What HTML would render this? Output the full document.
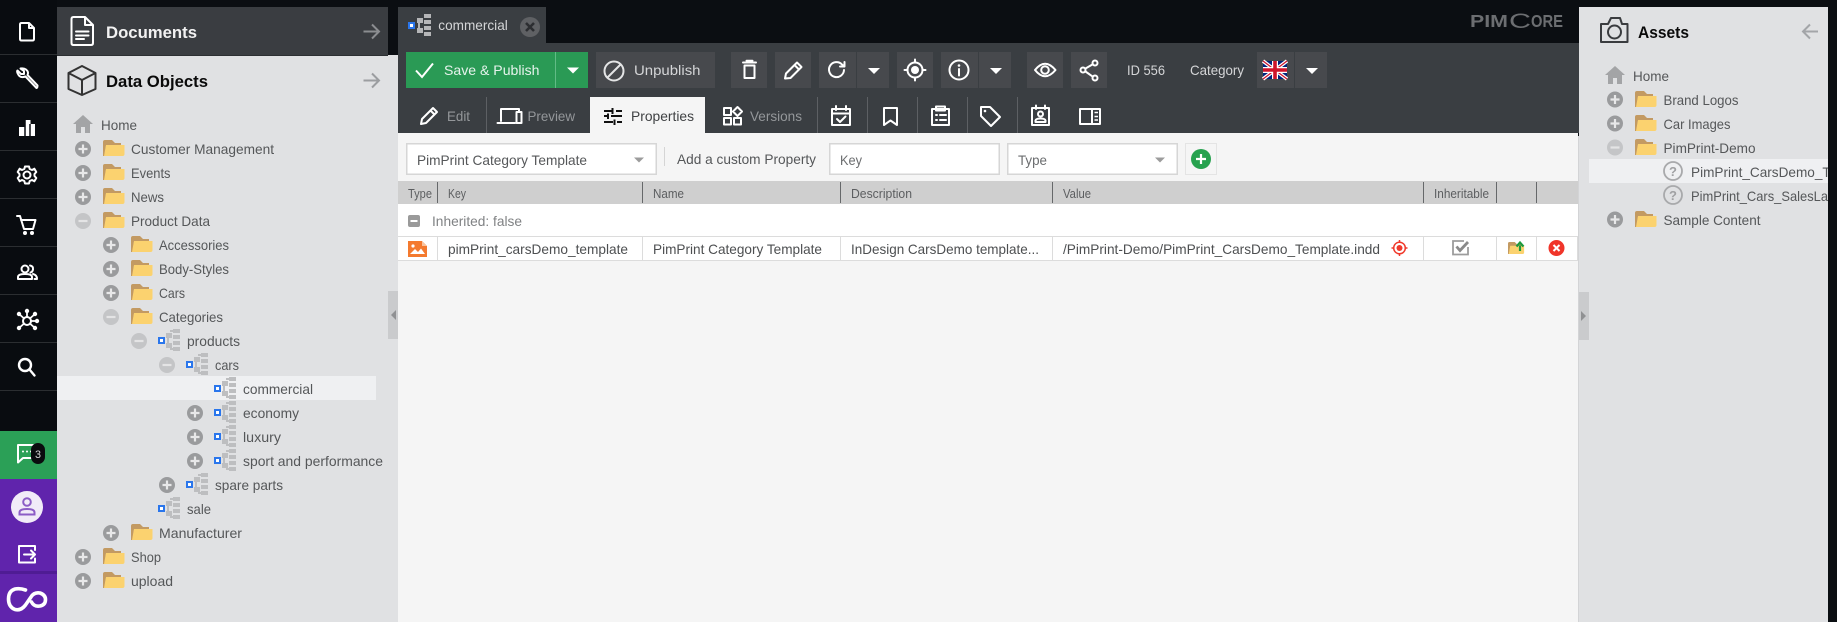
<!DOCTYPE html>
<html><head><meta charset="utf-8"><title>Pimcore</title>
<style>
html,body{margin:0;padding:0;width:1837px;height:622px;overflow:hidden;background:#0b0e12}
svg{display:block}
text{font-family:"Liberation Sans",sans-serif;font-size:14px;fill:#555759}
.b{font-weight:bold;font-size:17px;fill:#0a0a0a}
.l{fill:#d4d5d7}
.m{fill:#94979a}
.h{font-size:12.5px;fill:#5c5e60}
.r{fill:#4d4f51}
.w{fill:none;stroke:#fff;stroke-width:2;stroke-linecap:round;stroke-linejoin:round}
.w3{fill:none;stroke:#e4e5e6;stroke-width:2;stroke-linecap:round;stroke-linejoin:round}
.dk{fill:none;stroke:#333;stroke-width:2;stroke-linecap:round;stroke-linejoin:round}
.g{fill:#47494d}
</style></head>
<body>
<svg width="1837" height="622" viewBox="0 0 1837 622" xmlns="http://www.w3.org/2000/svg">
<defs>
<g id="plus"><circle r="8" fill="#9a9b9d"/><path d="M-4.500 0H4.500M0-4.500V4.500" stroke="#e8e8e9" stroke-width="2.200"/></g>
<g id="minus"><circle r="8" fill="#c4c5c7"/><path d="M-4.500 0H4.500" stroke="#e4e4e5" stroke-width="2.200"/></g>
<g id="folder"><path d="M0 16V2Q0 0 2 0H9L12 3H18V6H3L1.500 16Z" fill="#c39a62"/><path d="M1 16L3 5H21.500V14Q21.500 16 19.500 16Z" fill="#fbd26f"/></g>
<g id="obj"><rect x="1" y="9" width="5" height="5" fill="#fff" stroke="#2a76ec" stroke-width="2"/>
<g fill="#bdbec0"><rect x="15" y="0" width="7" height="4"/><rect x="8" y="4" width="6" height="5"/><rect x="15" y="6" width="7" height="4"/><rect x="15" y="12" width="7" height="4"/><rect x="8" y="14" width="6" height="5"/><rect x="15" y="18" width="7" height="4"/><rect x="9" y="9" width="2" height="5"/><rect x="12" y="1" width="3" height="2"/><rect x="12" y="19" width="3" height="2"/></g></g>
<g id="home"><path d="M10 0L20 9H17V18H12V12H8V18H3V9H0Z" fill="#a3a4a6"/></g>
<path id="tri" d="M-6-3H6L0 3Z" fill="#fff"/>
<path id="tri2" d="M-5-2.500H5L0 2.500Z" fill="#9c9c9c"/>
</defs>

<rect width="1837" height="622" fill="#0b0e12"/>

<!-- sidebar -->
<rect x="0" y="0" width="57" height="431" fill="#090c10"/>
<g stroke="#2b2e31" stroke-width="1"><path d="M0 54.500H57M0 102.500H57M0 150.500H57M0 198.500H57M0 246.500H57M0 294.500H57M0 342.500H57M0 390.500H57"/></g>
<path class="w" d="M20 24.500Q20 23 21.500 23H29L34 28V39Q34 40.500 32.500 40.500H21.500Q20 40.500 20 39ZM29 23V28H34" stroke-width="2.200"/>
<path class="w" d="M36.500 88L25.500 76.500Q20 78.500 18 74Q16.500 71.500 17.500 70.500L21 74H24V71L20.500 68.500Q24 68 26 69.500Q29 72 27.500 75L37.500 85.500Q37.500 88 36.500 88Z"/>
<path d="M19 127h6v9h-6zM24.500 120h6v16h-6zM30 124h5v12h-5z" fill="#fff"/><path d="M25 120v16M30 124v12" stroke="#090c10" stroke-width="1.500"/>
<g class="w"><circle cx="27" cy="175" r="3.500"/><path d="M25 166.500H29L29.700 169L32 170L34.300 168.700L36.300 172L34.500 174L34.500 176L36.300 178L34.300 181.300L32 180L29.700 181L29 183.500H25L24.300 181L22 180L19.700 181.300L17.700 178L19.500 176L19.500 174L17.700 172L19.700 168.700L22 170L24.300 169Z"/></g>
<path class="w" d="M17 216H20L24 229H33L35.500 220H21"/><circle cx="25" cy="233" r="2" fill="#fff"/><circle cx="32" cy="233" r="2" fill="#fff"/>
<g class="w"><circle cx="25" cy="269" r="3.500"/><path d="M18 279V277Q18 274 25 274Q32 274 32 277V279ZM30 265.500Q33.500 266 33 269.500Q32.500 272 30.500 272.500M33 274Q37 275 37 279H34.500"/></g>
<g><path stroke="#fff" stroke-width="1.800" d="M27 321L19 314M27 321L35 314M27 321L19 328M27 321L35 328M27 321L27 312M27 321L37 321"/><circle cx="27" cy="321" r="4" fill="#090c10" stroke="#fff" stroke-width="2"/><circle cx="19" cy="314" r="2.200" fill="#fff"/><circle cx="35" cy="314" r="2.200" fill="#fff"/><circle cx="19" cy="328" r="2.200" fill="#fff"/><circle cx="35" cy="328" r="2.200" fill="#fff"/><circle cx="27" cy="311" r="2.200" fill="#fff"/><circle cx="37" cy="321" r="2.200" fill="#fff"/></g>
<g class="w" style="stroke-width:2.400"><circle cx="25" cy="365" r="6"/><path d="M29.500 369.500L34.500 375.500"/></g>

<rect x="0" y="431" width="57" height="48" fill="#2ba057"/>
<path class="w" d="M18 445H34V458H23L18 462.500Z"/><circle cx="23" cy="451.500" r="1" fill="#fff"/><circle cx="27" cy="451.500" r="1" fill="#fff"/><circle cx="31" cy="451.500" r="1" fill="#fff"/>
<rect x="31" y="443" width="14" height="21" rx="7" fill="#0a0c0e"/>
<text x="35" y="458" style="font-size:11px;fill:#d8d8d8" textLength="6" lengthAdjust="spacingAndGlyphs">3</text>
<rect x="0" y="479" width="57" height="143" fill="#6024ac"/>
<circle cx="27" cy="507" r="16" fill="#f1ebf8"/>
<g fill="none" stroke="#8c5cc6" stroke-width="2"><circle cx="27" cy="502" r="3.800"/><path d="M19.500 514.500V512.500Q19.500 509 27 509Q34.500 509 34.500 512.500V514.500Z"/></g>
<path class="w" d="M35 550V546H19V562.500H35V558.500M24 554.500H35M31 550.500L35 554.500L31 558.500"/>
<rect x="0" y="571" width="57" height="3" fill="#4f1c94"/>
<path d="M25.500 590Q20 588 15 589Q8.500 591 8.500 599Q8.500 607 15 609.500Q21 611 25.500 605L31 597Q34 592 40 593Q45.500 595 45.500 599.500Q45.500 605 40 606Q34 607 31.500 602" fill="none" stroke="#fff" stroke-width="3.600" stroke-linecap="round"/>

<!-- left panel -->
<rect x="57" y="7" width="331" height="615" fill="#e0e1e3"/>
<rect x="57" y="7" width="331" height="48" fill="#3a3d41"/>
<path d="M57 55.500H388" stroke="#2c2f32"/>
<path class="w" d="M71.500 19Q71.500 17 73.500 17H85L93 25V43Q93 45 91 45H73.500Q71.500 45 71.500 43ZM85 17V25H93M76 31.500H88.500M76 35.500H88.500M76 39H84" stroke-width="1.800"/>
<text class="b" x="106" y="38" style="fill:#f2f2f2" textLength="91" lengthAdjust="spacingAndGlyphs">Documents</text>
<path d="M363.500 31.500H378.500M372 24.500L379 31.500L372 38.500" fill="none" stroke="#8b8d90" stroke-width="2"/>
<g class="dk"><path d="M82 66L95.500 73V89L82 95L68.500 89V73ZM68.500 73L82 80L95.500 73M82 80V95"/></g>
<text class="b" x="106" y="87" textLength="102" lengthAdjust="spacingAndGlyphs">Data Objects</text>
<path d="M363.500 80.500H378.500M372 73.500L379 80.500L372 87.500" fill="none" stroke="#9b9da0" stroke-width="2"/>

<use href="#home" x="73" y="115"/>
<text x="101" y="130" textLength="36" lengthAdjust="spacingAndGlyphs">Home</text>

<use href="#plus" x="83" y="149"/><use href="#folder" x="103" y="140"/><text x="131" y="154" textLength="143" lengthAdjust="spacingAndGlyphs">Customer Management</text>
<use href="#plus" x="83" y="173"/><use href="#folder" x="103" y="164"/><text x="131" y="178" textLength="39.500" lengthAdjust="spacingAndGlyphs">Events</text>
<use href="#plus" x="83" y="197"/><use href="#folder" x="103" y="188"/><text x="131" y="202" textLength="33" lengthAdjust="spacingAndGlyphs">News</text>
<use href="#minus" x="83" y="221"/><use href="#folder" x="103" y="212"/><text x="131" y="226" textLength="79" lengthAdjust="spacingAndGlyphs">Product Data</text>
<use href="#plus" x="111" y="245"/><use href="#folder" x="131" y="236"/><text x="159" y="250" textLength="70" lengthAdjust="spacingAndGlyphs">Accessories</text>
<use href="#plus" x="111" y="269"/><use href="#folder" x="131" y="260"/><text x="159" y="274" textLength="70" lengthAdjust="spacingAndGlyphs">Body-Styles</text>
<use href="#plus" x="111" y="293"/><use href="#folder" x="131" y="284"/><text x="159" y="298" textLength="26" lengthAdjust="spacingAndGlyphs">Cars</text>
<use href="#minus" x="111" y="317"/><use href="#folder" x="131" y="308"/><text x="159" y="322" textLength="64" lengthAdjust="spacingAndGlyphs">Categories</text>
<use href="#minus" x="139" y="341"/><use href="#obj" x="158" y="329"/><text x="187" y="346" textLength="53" lengthAdjust="spacingAndGlyphs">products</text>
<use href="#minus" x="167" y="365"/><use href="#obj" x="186" y="353"/><text x="215" y="370" textLength="24" lengthAdjust="spacingAndGlyphs">cars</text>
<rect x="57" y="376" width="319" height="24" fill="#eff0f2"/>
<use href="#obj" x="214" y="377"/><text x="243" y="394" textLength="70" lengthAdjust="spacingAndGlyphs">commercial</text>
<use href="#plus" x="195" y="413"/><use href="#obj" x="214" y="401"/><text x="243" y="418" textLength="56" lengthAdjust="spacingAndGlyphs">economy</text>
<use href="#plus" x="195" y="437"/><use href="#obj" x="214" y="425"/><text x="243" y="442" textLength="38" lengthAdjust="spacingAndGlyphs">luxury</text>
<use href="#plus" x="195" y="461"/><use href="#obj" x="214" y="449"/><text x="243" y="466" textLength="140" lengthAdjust="spacingAndGlyphs">sport and performance</text>
<use href="#plus" x="167" y="485"/><use href="#obj" x="186" y="473"/><text x="215" y="490" textLength="68" lengthAdjust="spacingAndGlyphs">spare parts</text>
<use href="#obj" x="158" y="497"/><text x="187" y="514" textLength="24" lengthAdjust="spacingAndGlyphs">sale</text>
<use href="#plus" x="111" y="533"/><use href="#folder" x="131" y="524"/><text x="159" y="538" textLength="83" lengthAdjust="spacingAndGlyphs">Manufacturer</text>
<use href="#plus" x="83" y="557"/><use href="#folder" x="103" y="548"/><text x="131" y="562" textLength="30" lengthAdjust="spacingAndGlyphs">Shop</text>
<use href="#plus" x="83" y="581"/><use href="#folder" x="103" y="572"/><text x="131" y="586" textLength="42" lengthAdjust="spacingAndGlyphs">upload</text>

<rect x="388" y="55" width="10" height="567" fill="#e0e1e3"/>
<rect x="388" y="291" width="10" height="48" fill="#cacbcd"/>
<path d="M391 315L396 310V320Z" fill="#909193"/>

<!-- main -->
<rect x="398" y="43" width="1181" height="90" fill="#3a3e42"/>
<rect x="398" y="133" width="1180" height="489" fill="#f5f5f5"/>
<rect x="398" y="7" width="148" height="36" fill="#3a3e42"/>
<rect x="409" y="23" width="5" height="5" fill="#fff" stroke="#2a76ec" stroke-width="2"/>
<g fill="#b5b6b8"><rect x="424" y="14" width="7" height="4"/><rect x="417" y="18" width="6" height="5"/><rect x="424" y="20" width="7" height="4"/><rect x="424" y="26" width="7" height="4"/><rect x="417" y="28" width="6" height="5"/><rect x="424" y="32" width="7" height="4"/><rect x="418" y="23" width="2" height="5"/></g>
<text class="l" x="438.300" y="30" textLength="69.500" lengthAdjust="spacingAndGlyphs">commercial</text>
<circle cx="530" cy="27" r="10" fill="#5f6164"/><path d="M526 23L534 31M534 23L526 31" stroke="#2c2e31" stroke-width="2.600"/>

<!-- logo -->
<text x="1470" y="27" textLength="38" lengthAdjust="spacingAndGlyphs" style="font-size:17.500px;font-weight:bold;fill:#6c6e71">PIM</text>
<text x="1509" y="28" textLength="22" lengthAdjust="spacingAndGlyphs" style="font-size:21px;fill:#6c6e71">C</text>
<text x="1531" y="27" textLength="32" lengthAdjust="spacingAndGlyphs" style="font-size:17.500px;font-weight:bold;fill:#6c6e71">ORE</text>

<!-- toolbar -->
<rect x="406" y="52" width="182" height="36" fill="#2a9a55"/>
<rect x="555" y="52" width="1" height="36" fill="#62bb86"/>
<path d="M416 70.500L422 77L433 63.500" fill="none" stroke="#fff" stroke-width="2"/>
<text x="444" y="75" style="fill:#e6f3ec" textLength="95.500" lengthAdjust="spacingAndGlyphs">Save &amp; Publish</text>
<use href="#tri" x="573" y="70.500"/>
<rect class="g" x="596" y="52" width="119" height="36"/>
<circle class="w3" cx="614" cy="71" r="9.500"/><path class="w3" d="M607.500 77.500L620.500 64.500"/>
<text class="l" x="634" y="75" textLength="66.500" lengthAdjust="spacingAndGlyphs">Unpublish</text>
<rect class="g" x="731" y="52" width="36" height="36"/>
<path class="w" d="M743 62.500H756M746.500 60.800H752.500M744.500 65.500H754.500V78H744.500Z"/>
<rect class="g" x="775" y="52" width="36" height="36"/>
<path class="w" d="M785 78.500L786 73.500L797 62.500L801.500 67L790.500 78ZM794.500 65L799 69.500"/>
<rect class="g" x="819" y="52" width="37" height="36"/>
<path class="w" d="M844 70A7.500 7.500 0 1 1 842 64.500L844.500 66.500M844.500 62V66.500H840"/>
<rect class="g" x="857" y="52" width="32" height="36"/><use href="#tri" x="874" y="71"/>
<rect class="g" x="897" y="52" width="36" height="36"/>
<circle class="w" cx="915" cy="70" r="7.500"/><circle cx="915" cy="70" r="4" fill="#fff"/><path class="w" d="M915 59.500V62.500M915 77.500V80.500M904.500 70H907.500M922.500 70H925.500"/>
<rect class="g" x="941" y="52" width="37" height="36"/>
<circle class="w" cx="959" cy="70" r="9.500"/><path class="w" d="M959 69V75.500"/><circle cx="959" cy="65.500" r="1.300" fill="#fff"/>
<rect class="g" x="979" y="52" width="32" height="36"/><use href="#tri" x="996" y="71"/>
<rect class="g" x="1027" y="52" width="36" height="36"/>
<path class="w" d="M1035 70Q1045 57.500 1055.500 70Q1045 82.500 1035 70Z"/><circle class="w" cx="1045" cy="70" r="3.800"/>
<rect class="g" x="1071" y="52" width="36" height="36"/>
<g class="w"><circle cx="1095" cy="63" r="2.500"/><circle cx="1095" cy="78" r="2.500"/><circle cx="1083" cy="70" r="2.500"/><path d="M1085.500 68.500L1092.800 64.300M1085.500 71.500L1092.800 76.700"/></g>
<text class="l" x="1127" y="75" textLength="38" lengthAdjust="spacingAndGlyphs">ID 556</text>
<text class="l" x="1190" y="75" textLength="54" lengthAdjust="spacingAndGlyphs">Category</text>
<rect class="g" x="1257" y="52" width="37" height="36"/>
<g><rect x="1263" y="61" width="24" height="18" fill="#00247d"/><path d="M1263 61L1287 79M1287 61L1263 79" stroke="#fff" stroke-width="3.600"/><path d="M1263 61L1287 79M1287 61L1263 79" stroke="#cf142b" stroke-width="1.200"/><path d="M1275 61V79M1263 70H1287" stroke="#fff" stroke-width="6"/><path d="M1275 61V79M1263 70H1287" stroke="#cf142b" stroke-width="3.600"/></g>
<rect class="g" x="1295" y="52" width="32" height="36"/><use href="#tri" x="1312" y="71"/>

<!-- tabs -->
<g stroke="#5d6064"><path d="M486.500 97V133M817.500 97V133M867.500 97V133M917.500 97V133M967.500 97V133M1017.500 97V133"/></g>
<rect x="590" y="97" width="115" height="36" fill="#f5f5f5"/>
<path class="w" d="M421 124L422 119L433 108L437 112L426 123ZM430.500 110.500L434.500 114.500"/>
<text class="m" x="447" y="121" textLength="23" lengthAdjust="spacingAndGlyphs">Edit</text>
<path class="w" d="M501 121V109H519V112M497.500 123H515M516.500 112H521.500V123H516.500Z"/>
<text class="m" x="527.500" y="121" textLength="47.500" lengthAdjust="spacingAndGlyphs">Preview</text>
<path d="M604 111H612M616 111H622M604 116H607M611 116H622M604 122H613M617 122H622M612.500 108V114M608 113.500V119M614.500 119.500V125" fill="none" stroke="#111" stroke-width="2"/>
<text x="631" y="121" style="fill:#3f4143" textLength="63" lengthAdjust="spacingAndGlyphs">Properties</text>
<path class="w" d="M724 108H731V115H724ZM724 118H731V124.500H724ZM734 118H741V124.500H734ZM737.500 107L742 111.500L737.500 116L733 111.500Z"/>
<text class="m" x="750" y="121" textLength="52" lengthAdjust="spacingAndGlyphs">Versions</text>
<path class="w" d="M832 109H850V125H832ZM832 113.500H850M836 106V110M846 106V110M837 119L840 122L845.500 116.500"/>
<path class="w" d="M884 108H897V125L890.500 120.500L884 125Z"/>
<path class="w" d="M932 109H949V125H932ZM936 106.500H945V110.500H936ZM936 115H937M940 115H946M936 120H937M940 120H946"/>
<path class="w" d="M981 107H990L1000 117L991 126L981 116Z"/><circle cx="985" cy="111" r="1.300" fill="#fff"/>
<path class="w" d="M1032 108H1049V125H1032ZM1036 105.500V109M1045 105.500V109"/><circle class="w" cx="1040.500" cy="114" r="2.500"/><path class="w" d="M1035.500 122V120.500Q1036 118.500 1040.500 118.500Q1045 118.500 1045.500 120.500V122Z"/>
<path class="w" d="M1080 109H1100V124H1080ZM1092 109V124"/><path d="M1094.500 112.500H1098M1094.500 116.500H1098M1094.500 120H1098" stroke="#fff" stroke-width="1.400"/>

<!-- form -->
<rect x="406.750" y="143.750" width="249.500" height="30.500" fill="#fff" stroke="#d6d6d6" stroke-width="1.500"/>
<text x="417" y="165" textLength="170" lengthAdjust="spacingAndGlyphs">PimPrint Category Template</text>
<use href="#tri2" x="639" y="160"/>
<path d="M664.500 147V166" stroke="#d5d5d5"/>
<text x="677" y="164" textLength="139" lengthAdjust="spacingAndGlyphs">Add a custom Property</text>
<rect x="829.750" y="143.750" width="169.500" height="30.500" fill="#fff" stroke="#d6d6d6" stroke-width="1.500"/>
<text x="840" y="165" style="fill:#6b6d6f" textLength="22" lengthAdjust="spacingAndGlyphs">Key</text>
<rect x="1007.750" y="143.750" width="169.500" height="30.500" fill="#fff" stroke="#d6d6d6" stroke-width="1.500"/>
<text x="1018" y="165" style="fill:#6b6d6f" textLength="29" lengthAdjust="spacingAndGlyphs">Type</text>
<use href="#tri2" x="1160" y="160"/>
<rect x="1185.500" y="143.500" width="31" height="31" fill="#f5f5f5" stroke="#e4e4e4"/>
<circle cx="1201" cy="159" r="10" fill="#27a24f"/><path d="M1196 159H1206M1201 154V164" stroke="#fff" stroke-width="2.200"/>

<!-- grid -->
<rect x="398" y="181" width="1180" height="23" fill="#cfcfcf"/>
<g stroke="#66686a" fill="none"><path d="M437.500 182V203M642.500 182V203M840.500 182V203M1052.500 182V203M1423.500 182V203M1496.500 182V203M1536.500 182V203"/></g>
<text class="h" x="408" y="198" textLength="24" lengthAdjust="spacingAndGlyphs">Type</text>
<text class="h" x="448" y="198" textLength="18" lengthAdjust="spacingAndGlyphs">Key</text>
<text class="h" x="653" y="198" textLength="31" lengthAdjust="spacingAndGlyphs">Name</text>
<text class="h" x="851" y="198" textLength="61" lengthAdjust="spacingAndGlyphs">Description</text>
<text class="h" x="1063" y="198" textLength="28" lengthAdjust="spacingAndGlyphs">Value</text>
<text class="h" x="1434" y="198" textLength="55" lengthAdjust="spacingAndGlyphs">Inheritable</text>
<rect x="398" y="204" width="1180" height="32" fill="#fff"/>
<rect x="408" y="215" width="12" height="12" rx="2" fill="#9a9a9a"/><path d="M410.500 221H417.500" stroke="#fff" stroke-width="2"/>
<text x="432" y="226" style="fill:#808284" textLength="90" lengthAdjust="spacingAndGlyphs">Inherited: false</text>
<rect x="398" y="236" width="1180" height="25" fill="#fff"/>
<g stroke="#dcdcdc" fill="none"><path d="M398 236.500H1577.500V260.500H398M437.500 236V261M642.500 236V261M840.500 236V261M1052.500 236V261M1423.500 236V261M1496.500 236V261M1536.500 236V261"/></g>
<path d="M408 241H422L427 246V257H408Z" fill="#f47a2f"/><path d="M422 241V246H427Z" fill="#f9c49f"/>
<circle cx="413" cy="246" r="1.600" fill="#fff"/><path d="M410 254L415 249L418 252L421 248.500L425 254Z" fill="#fff"/>
<text class="r" x="448" y="254" textLength="180" lengthAdjust="spacingAndGlyphs">pimPrint_carsDemo_template</text>
<text class="r" x="653" y="254" textLength="169" lengthAdjust="spacingAndGlyphs">PimPrint Category Template</text>
<text class="r" x="851" y="254" textLength="188" lengthAdjust="spacingAndGlyphs">InDesign CarsDemo template...</text>
<text class="r" x="1063" y="254" textLength="317" lengthAdjust="spacingAndGlyphs">/PimPrint-Demo/PimPrint_CarsDemo_Template.indd</text>
<circle cx="1399.500" cy="248" r="5.800" fill="none" stroke="#f0392b" stroke-width="1.500"/><circle cx="1399.500" cy="248" r="3" fill="#f0392b"/><path d="M1399.500 240V243M1399.500 253V256M1391.500 248H1394.500M1404.500 248H1407.500" stroke="#f0392b" stroke-width="1.500"/>
<path d="M1468 247V254.500H1453V241H1464" fill="none" stroke="#9c9c9c" stroke-width="1.800"/><path d="M1456.500 246.500L1460 250.500L1468 242" fill="none" stroke="#8a8a8a" stroke-width="2.800"/>
<use href="#folder" transform="translate(1508 242) scale(.75)"/>
<path d="M1520 251V245.500M1516.500 246.500L1520 242.500L1523.500 246.500" fill="none" stroke="#1c9a3c" stroke-width="2.200"/>
<circle cx="1556.500" cy="248" r="8" fill="#f0352a"/><path d="M1553.500 245L1559.500 251M1559.500 245L1553.500 251" stroke="#fff" stroke-width="2"/>

<path d="M1578.500 136V622" stroke="#d3d4d6"/>

<!-- right panel -->
<rect x="1579" y="7" width="249" height="615" fill="#e0e1e3"/>
<rect x="1579" y="292" width="10" height="48" fill="#cacbcd"/>
<path d="M1586 316L1581 311V321Z" fill="#909193"/>
<path class="dk" d="M1601 24H1608L1611 18H1620L1622 24H1627.500V42H1601Z" style="stroke:#3a3c3f"/><circle class="dk" cx="1614.500" cy="32" r="6.500" style="stroke:#3a3c3f"/>
<text class="b" x="1638" y="38" textLength="51" lengthAdjust="spacingAndGlyphs">Assets</text>
<path d="M1818 31.500H1803M1810 24.500L1803 31.500L1810 38.500" fill="none" stroke="#a3a5a8" stroke-width="2"/>
<use href="#home" x="1605" y="66"/>
<text x="1633" y="81" textLength="36" lengthAdjust="spacingAndGlyphs">Home</text>
<use href="#plus" x="1615" y="99.500"/><use href="#folder" x="1635" y="91"/><text x="1663.500" y="105" textLength="75" lengthAdjust="spacingAndGlyphs">Brand Logos</text>
<use href="#plus" x="1615" y="123.500"/><use href="#folder" x="1635" y="115"/><text x="1663.500" y="129" textLength="67" lengthAdjust="spacingAndGlyphs">Car Images</text>
<use href="#minus" x="1615" y="147.500"/><use href="#folder" x="1635" y="139"/><text x="1663.500" y="153" textLength="92" lengthAdjust="spacingAndGlyphs">PimPrint-Demo</text>
<rect x="1589" y="159" width="239" height="24" fill="#eff0f2"/>
<circle cx="1673" cy="171" r="9" fill="none" stroke="#a8a9ab" stroke-width="1.800"/><text x="1669" y="176" style="fill:#a0a1a3;font-size:13px;font-weight:bold">?</text>
<text x="1691" y="177" textLength="216" lengthAdjust="spacingAndGlyphs">PimPrint_CarsDemo_Template.indd</text>
<circle cx="1673" cy="195" r="9" fill="none" stroke="#a8a9ab" stroke-width="1.800"/><text x="1669" y="200" style="fill:#a0a1a3;font-size:13px;font-weight:bold">?</text>
<text x="1691" y="201" textLength="137" lengthAdjust="spacingAndGlyphs">PimPrint_Cars_SalesLa</text>
<use href="#plus" x="1615" y="219.500"/><use href="#folder" x="1635" y="211"/><text x="1663.500" y="225" textLength="97" lengthAdjust="spacingAndGlyphs">Sample Content</text>
<rect x="1828" y="0" width="9" height="622" fill="#0b0e12"/>
</svg>
</body></html>
